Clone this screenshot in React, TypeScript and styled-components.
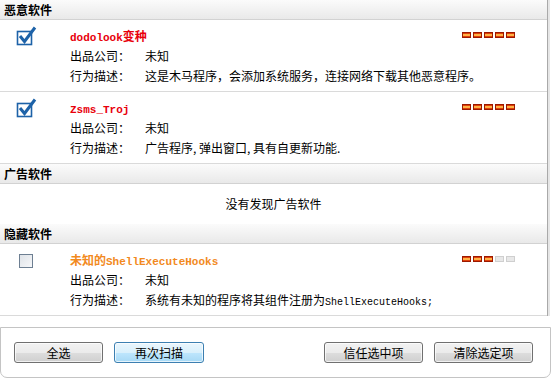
import styled, { createGlobalStyle } from "styled-components";

const GlobalStyle = createGlobalStyle`
  html, body {
    margin: 0;
    padding: 0;
    background: #fff;
  }
  body {
    font-family: "Noto Sans CJK SC", "DejaVu Sans", sans-serif;
    font-size: 12px;
    color: #000;
  }
  * {
    box-sizing: border-box;
  }
`;

const Page = styled.div`
  width: 553px;
  height: 384px;
  display: flex;
  flex-direction: column;
  overflow: hidden;
`;

const List = styled.div`
  width: 548px;
  border-right: 1px solid #a9a9a9;
  box-shadow: 2px 0 0 #e6e6e6;
  display: flex;
  flex-direction: column;
`;

const SectionHeader = styled.div`
  height: 20px;
  line-height: 19px;
  padding-left: 4px;
  font-weight: bold;
  font-size: 12px;
  background: linear-gradient(#fbfbfb, #e9e9e9);
  border-bottom: 1px solid #d2d2d2;
`;

const Row = styled.div`
  display: grid;
  grid-template-columns: 70px 392px 85px;
  height: 72px;
  border-bottom: 1px solid #dadada;
`;

const CheckCell = styled.div`
  padding-top: 6px;
  padding-left: 16px;
`;

const Info = styled.div`
  padding-top: 6px;
  display: flex;
  flex-direction: column;
  min-width: 0;
`;

const Title = styled.div<{ $tone: "red" | "orange" }>`
  height: 20px;
  line-height: 20px;
  font-weight: bold;
  font-size: 12px;
  color: ${(p) => (p.$tone === "red" ? "#e8000b" : "#f28a1e")};
`;

const Latin = styled.span`
  font-family: "Liberation Mono", monospace;
  font-size: 11px;
  font-weight: bold;
`;

const Mono = styled.span`
  font-family: "Liberation Mono", monospace;
  font-size: 10px;
`;

const Line = styled.div`
  display: flex;
  height: 20px;
  line-height: 20px;
  white-space: nowrap;
`;

const Label = styled.span`
  width: 75px;
  flex: none;
`;

const RatingCell = styled.div`
  padding-top: 12px;
  display: flex;
  gap: 2px;
  align-items: flex-start;
`;

const Bar = styled.span<{ $on: boolean }>`
  width: 9px;
  height: 6px;
  border: 1px solid ${(p) => (p.$on ? "#9c1a00" : "#cfcfcf")};
  background: ${(p) =>
    p.$on
      ? "linear-gradient(#e0400a 0, #e0400a 35%, #ffb347 35%, #ffb347 65%, #e0400a 65%)"
      : "#e8e8e8"};
`;

const EmptyRow = styled.div`
  height: 40px;
  line-height: 40px;
  text-align: center;
`;

const Footer = styled.div`
  margin-top: 11px;
  width: 551px;
  height: 51px;
  border: 1px solid #c4c4c4;
  border-radius: 0 0 7px 7px;
  display: flex;
  align-items: center;
  padding: 0 17px 0 13px;
  gap: 11px;
`;

const Spacer = styled.div`
  flex: 1;
`;

const Button = styled.button<{ $primary?: boolean; $w: number }>`
  width: ${(p) => p.$w}px;
  height: 21px;
  padding: 0;
  font-family: "Noto Sans CJK SC", sans-serif;
  font-size: 12px;
  color: #000;
  border-radius: 3px;
  border: 1px solid ${(p) => (p.$primary ? "#3c7fb1" : "#707070")};
  background: ${(p) =>
    p.$primary
      ? "linear-gradient(#eaf6fd 0, #d9f0fc 50%, #bee6fd 51%, #a7d9f5 100%)"
      : "linear-gradient(#f2f2f2 0, #ebebeb 50%, #dddddd 51%, #cfcfcf 100%)"};
  box-shadow: inset 0 0 0 1px rgba(255, 255, 255, 0.7);
`;

function CheckedIcon() {
  return (
    <svg width="22" height="20" viewBox="0 0 22 20">
      <rect x="1.5" y="5.5" width="14" height="13" fill="#fff" stroke="#1d62a8" strokeWidth="1.6" />
      <path d="M4 10 L8.5 15.5 L19 1.5" fill="none" stroke="#1d62a8" strokeWidth="3" strokeLinejoin="miter" />
    </svg>
  );
}

const EmptyBox = styled.span`
  display: block;
  margin: 4px 0 0 3px;
  width: 14px;
  height: 14px;
  border: 1px solid #6d7f92;
  background: linear-gradient(135deg, #dfe3e8, #f6f7f9);
`;

interface Item {
  name: React.ReactNode;
  tone: "red" | "orange";
  checked: boolean;
  company: string;
  desc: React.ReactNode;
  level: number;
}

function ItemRow({ item }: { item: Item }) {
  return (
    <Row>
      <CheckCell>{item.checked ? <CheckedIcon /> : <EmptyBox />}</CheckCell>
      <Info>
        <Title $tone={item.tone}>{item.name}</Title>
        <Line>
          <Label>出品公司：</Label>
          <span>{item.company}</span>
        </Line>
        <Line>
          <Label>行为描述：</Label>
          <span>{item.desc}</span>
        </Line>
      </Info>
      <RatingCell>
        {[0, 1, 2, 3, 4].map((i) => (
          <Bar key={i} $on={i < item.level} />
        ))}
      </RatingCell>
    </Row>
  );
}

const malware: Item[] = [
  {
    name: (
      <>
        <Latin>dodolook</Latin>变种
      </>
    ),
    tone: "red",
    checked: true,
    company: "未知",
    desc: "这是木马程序，会添加系统服务，连接网络下载其他恶意程序。",
    level: 5,
  },
  {
    name: <Latin>Zsms_Troj</Latin>,
    tone: "red",
    checked: true,
    company: "未知",
    desc: "广告程序, 弹出窗口, 具有自更新功能.",
    level: 5,
  },
];

const hidden: Item = {
  name: (
    <>
      未知的<Latin>ShellExecuteHooks</Latin>
    </>
  ),
  tone: "orange",
  checked: false,
  company: "未知",
  desc: (
    <>
      系统有未知的程序将其组件注册为<Mono>ShellExecuteHooks;</Mono>
    </>
  ),
  level: 3,
};

export default function App() {
  return (
    <Page>
      <GlobalStyle />
      <List>
        <SectionHeader>恶意软件</SectionHeader>
        {malware.map((m, i) => (
          <ItemRow key={i} item={m} />
        ))}
        <SectionHeader>广告软件</SectionHeader>
        <EmptyRow>没有发现广告软件</EmptyRow>
        <SectionHeader>隐藏软件</SectionHeader>
        <ItemRow item={hidden} />
      </List>
      <Footer>
        <Button $w={89}>全选</Button>
        <Button $w={90} $primary>
          再次扫描
        </Button>
        <Spacer />
        <Button $w={99}>信任选中项</Button>
        <Button $w={99}>清除选定项</Button>
      </Footer>
    </Page>
  );
}
